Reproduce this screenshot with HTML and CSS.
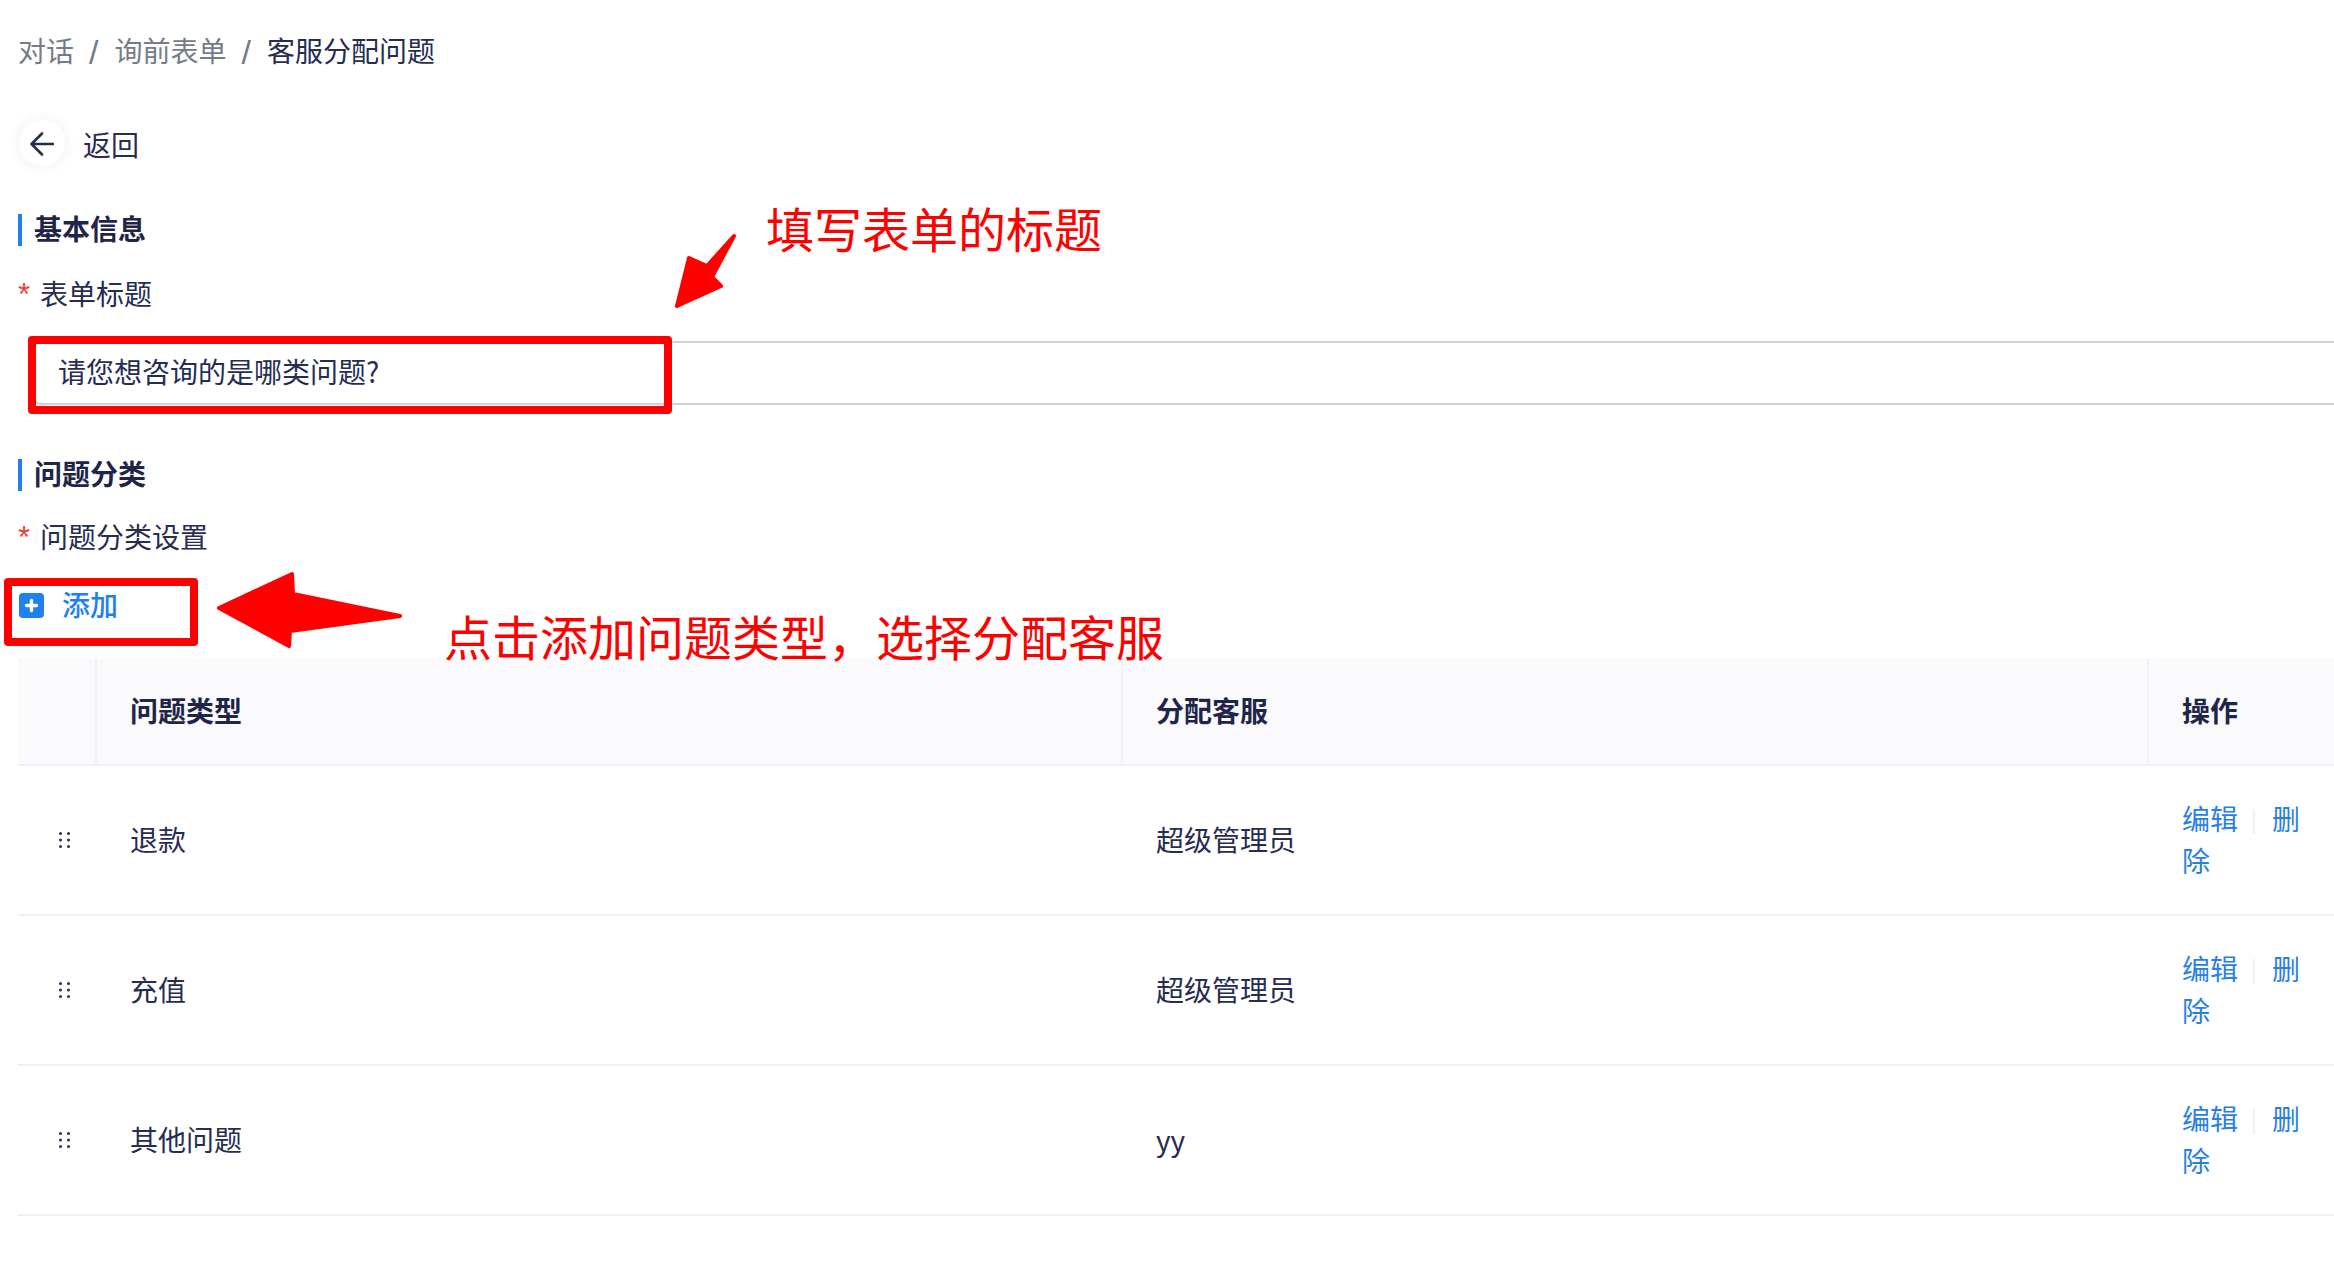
FILE: index.html
```html
<!DOCTYPE html>
<html lang="zh-CN">
<head>
<meta charset="utf-8">
<title>客服分配问题</title>
<link rel="stylesheet" href="styles.css">
</head>
<body>
<main class="page">
  <nav class="crumbs">
    <span class="crumb">对话</span><span class="sep">/</span>
    <span class="crumb">询前表单</span><span class="sep">/</span>
    <span class="crumb current">客服分配问题</span>
  </nav>

  <div class="back">
    <span class="back-circle">
      <svg class="back-icon" viewBox="0 0 24 24" width="24" height="24" fill="none" stroke="currentColor" stroke-width="2.6" stroke-linecap="round" stroke-linejoin="round"><path d="M23 12H2M12 1.500L1.500 12L12 22.500"/></svg>
    </span>
    <span class="back-text">返回</span>
  </div>

  <h2 class="section first">基本信息</h2>
  <div class="label label-one"><span class="star">*</span>表单标题</div>
  <div class="input-wrap"><input class="input" type="text" value="请您想咨询的是哪类问题?"></div>

  <h2 class="section second">问题分类</h2>
  <div class="label label-two"><span class="star">*</span>问题分类设置</div>
  <div class="add">
    <svg class="add-icon" viewBox="0 0 25 25" width="25" height="25"><rect width="25" height="25" rx="4" fill="#2080f0"/><path d="M12.500 7.500v10M7.500 12.500h10" stroke="#fff" stroke-width="3.400" stroke-linecap="round"/></svg>
    <span class="add-text">添加</span>
  </div>

  <table class="grid">
    <colgroup><col class="c-drag"><col class="c-type"><col class="c-agent"><col class="c-ops"></colgroup>
    <thead>
      <tr><th></th><th>问题类型</th><th>分配客服</th><th>操作</th></tr>
    </thead>
    <tbody>
      <tr>
        <td class="drag"><svg viewBox="0 0 11 16" width="11" height="16" fill="#2b3050"><circle cx="1.500" cy="1.500" r="1.500"/><circle cx="9.500" cy="1.500" r="1.500"/><circle cx="1.500" cy="8" r="1.500"/><circle cx="9.500" cy="8" r="1.500"/><circle cx="1.500" cy="14.500" r="1.500"/><circle cx="9.500" cy="14.500" r="1.500"/></svg></td>
        <td>退款</td><td>超级管理员</td>
        <td class="ops"><a>编辑</a><i class="bar"></i><a>删除</a></td>
      </tr>
      <tr>
        <td class="drag"><svg viewBox="0 0 11 16" width="11" height="16" fill="#2b3050"><circle cx="1.500" cy="1.500" r="1.500"/><circle cx="9.500" cy="1.500" r="1.500"/><circle cx="1.500" cy="8" r="1.500"/><circle cx="9.500" cy="8" r="1.500"/><circle cx="1.500" cy="14.500" r="1.500"/><circle cx="9.500" cy="14.500" r="1.500"/></svg></td>
        <td>充值</td><td>超级管理员</td>
        <td class="ops"><a>编辑</a><i class="bar"></i><a>删除</a></td>
      </tr>
      <tr>
        <td class="drag"><svg viewBox="0 0 11 16" width="11" height="16" fill="#2b3050"><circle cx="1.500" cy="1.500" r="1.500"/><circle cx="9.500" cy="1.500" r="1.500"/><circle cx="1.500" cy="8" r="1.500"/><circle cx="9.500" cy="8" r="1.500"/><circle cx="1.500" cy="14.500" r="1.500"/><circle cx="9.500" cy="14.500" r="1.500"/></svg></td>
        <td>其他问题</td><td>yy</td>
        <td class="ops"><a>编辑</a><i class="bar"></i><a>删除</a></td>
      </tr>
    </tbody>
  </table>

  <div class="mark mark-title"></div>
  <div class="mark mark-add"></div>
  <div class="note note-title">填写表单的标题</div>
  <div class="note note-add">点击添加问题类型，选择分配客服</div>
  <svg class="arrow arrow-title" viewBox="0 0 70 80" width="70" height="80" fill="#ff0000" stroke="#ff0000" stroke-width="4" stroke-linejoin="round"><path d="M65 3L38 33L20 25L8 73L52 53L43 44Z"/></svg>
  <svg class="arrow arrow-add" viewBox="0 0 190 80" width="190" height="80" fill="#ff0000" stroke="#ff0000" stroke-width="4" stroke-linejoin="round"><path d="M4 38L77 4L78 24L185 46L75 61L74 76Z"/></svg>
</main>
</body>
</html>
```
FILE: styles.css
```css
* { box-sizing: border-box; }
html, body { margin: 0; padding: 0; background: #fff; overflow: hidden; }
body {
  width: 2334px;
  height: 1282px;
  font-family: "Noto Sans CJK SC", "Noto Sans", sans-serif;
  font-size: 28px;
  line-height: 42px;
  color: #262c52;
}
.page { position: relative; padding: 30px 0 0 18px; width: 2334px; height: 1282px; overflow: hidden; }

.crumbs { display: flex; align-items: center; height: 42px; padding-bottom: 3px; color: #767b8a; }
.sep {
  margin: 0 16px 0 15px; font-family: "Liberation Sans", sans-serif; font-size: 34px;
  position: relative; top: 2px;
}
.current { color: #262c52; }

.back { display: flex; align-items: center; gap: 18px; margin: 48px 0 0 1px; height: 46px; }
.back-circle {
  display: flex; align-items: center; justify-content: center;
  width: 46px; height: 46px; border-radius: 50%;
  background: #fff; box-shadow: 0 0 14px rgba(30, 34, 60, .08);
}
.back-icon { display: block; margin-top: 2px; }
.back-text { margin-top: 1px; }

.section {
  margin: 0; height: 32px; line-height: 29px; padding-left: 12px;
  border-left: 4px solid #2080f0;
  font-size: 28px; font-weight: 600; color: #1f2549;
}
.section.first { margin-top: 48px; }
.section.second { margin-top: 54px; }

.label { height: 42px; display: flex; align-items: center; }
.label-one { margin-top: 26px; }
.label-two { margin-top: 24px; }
.star {
  width: 22px; color: #e8443a; font-size: 31px;
  font-family: "Liberation Sans", sans-serif;
  position: relative; top: 2px;
}

.input-wrap { margin: 27px 0 0 16px; width: 2400px; }
.input {
  display: block; width: 100%; height: 64px; padding: 0 22px 5px;
  border: 2px solid #cfd0dd; border-radius: 6px; outline: 0; background: #fff;
  font: inherit; color: #262c52;
}

.add { display: flex; align-items: center; gap: 18px; margin: 27px 0 0 1px; height: 42px; color: #2080f0; font-weight: 500; }
.add-icon { display: block; }
.add-text { margin-bottom: 3px; }

.grid { margin-top: 32px; width: 2316px; table-layout: fixed; border-collapse: separate; border-spacing: 0; }
.c-drag { width: 79px; }
.c-type, .c-agent { width: 1026px; }
.c-ops { width: 185px; }
.grid th {
  height: 108px; padding: 0 33px 2px; text-align: left;
  background: #fafafc; font-weight: 600; color: #1f2549;
  border-bottom: 2px solid #efeff5; border-right: 2px solid #f1f1f6;
}
.grid th:last-child { border-right: 0; }
.grid td { height: 150px; padding: 0 33px 2px; border-bottom: 2px solid #efeff5; }
.grid td.drag { padding: 0 0 0 13px; }
.drag svg { display: block; margin: 0 auto; }
.grid td.ops { color: #2a7fe6; }
.ops .bar {
  display: inline-block; width: 2px; height: 25px; margin: 0 17px 0 15px;
  background: #eef0f5; vertical-align: -4px;
}

.mark { position: absolute; border: 8px solid #ff0000; border-radius: 4px; }
.mark-title { left: 28px; top: 336px; width: 644px; height: 78px; }
.mark-add { left: 4px; top: 578px; width: 194px; height: 68px; }
.note { position: absolute; font-size: 48px; line-height: 60px; color: #ff0000; white-space: nowrap; }
.note-title { left: 766px; top: 197px; }
.note-add { left: 444px; top: 605px; }
.arrow { position: absolute; display: block; }
.arrow-title { left: 669px; top: 233px; }
.arrow-add { left: 215px; top: 570px; }
```
